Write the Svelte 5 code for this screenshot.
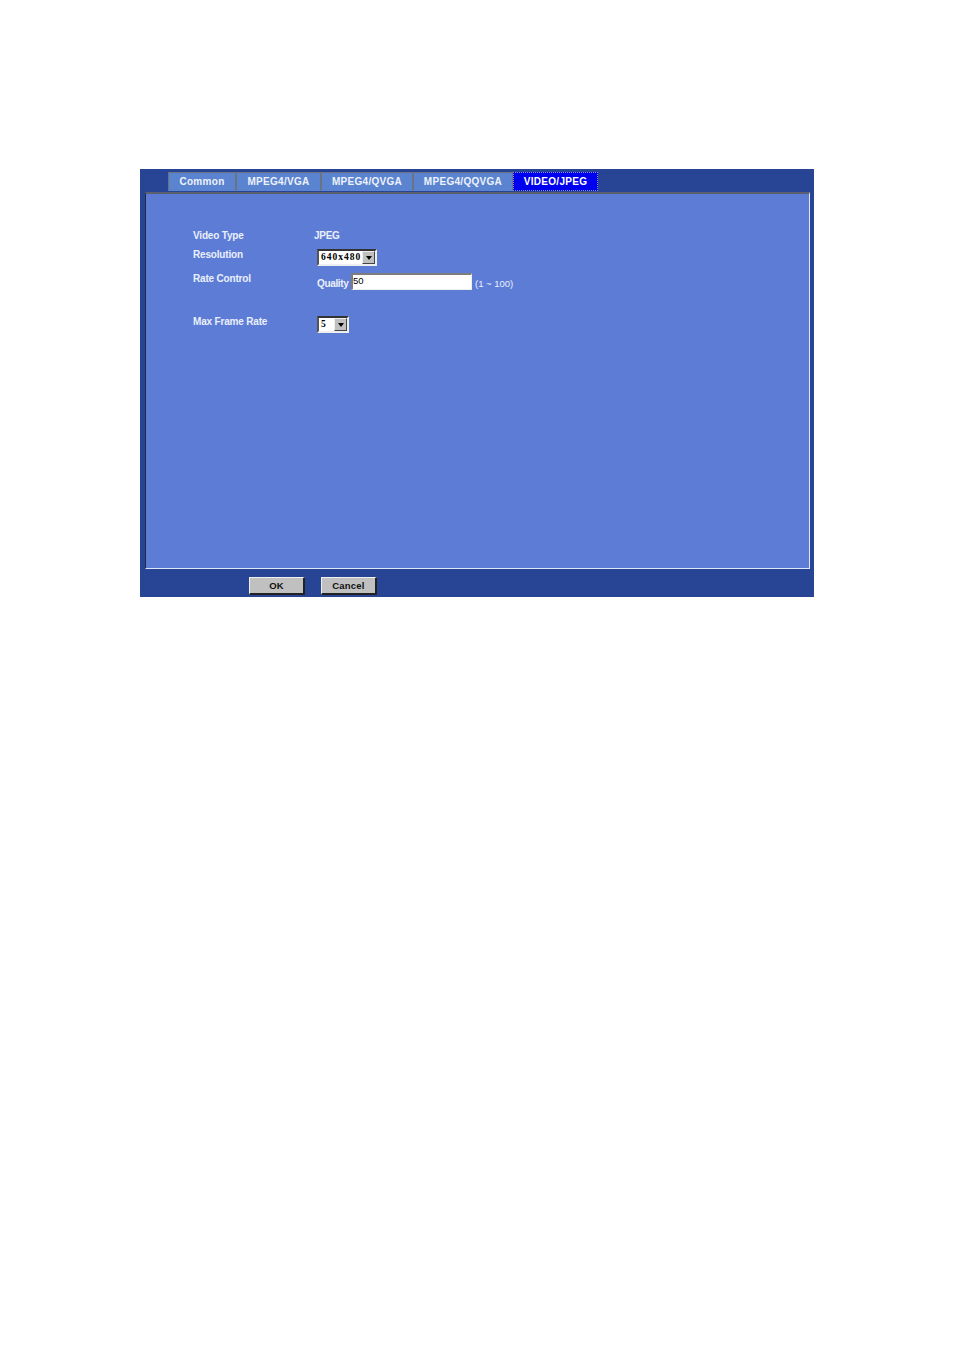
<script>
  const tabs = [
    { label: 'Common', w: 68 },
    { label: 'MPEG4/VGA', w: 85 },
    { label: 'MPEG4/QVGA', w: 92 },
    { label: 'MPEG4/QQVGA', w: 100 },
    { label: 'VIDEO/JPEG', w: 85, active: true }
  ];
</script>

<div class="page">
  <div class="window">
    <div class="tabs">
      {#each tabs as t}
        <div class="tab" class:active={t.active} style="width:{t.w}px">{t.label}</div>
      {/each}
    </div>
    <div class="panel">
      <div class="row r1"><span class="label">Video Type</span><span class="val jpeg">JPEG</span></div>
      <div class="row r2">
        <span class="label">Resolution</span>
        <div class="select res"><span class="sv">640x480</span><span class="arrow"><i></i></span></div>
      </div>
      <div class="row r3">
        <span class="label">Rate Control</span>
        <div class="quality">
          <span class="q">Quality</span>
          <div class="input">50</div>
          <span class="range">(1 ~ 100)</span>
        </div>
      </div>
      <div class="row r4">
        <span class="label">Max Frame Rate</span>
        <div class="select fps"><span class="sv">5</span><span class="arrow"><i></i></span></div>
      </div>
    </div>
    <div class="actions">
      <div class="btn">OK</div>
      <div class="btn">Cancel</div>
    </div>
  </div>
</div>

<style>
  :global(body) { margin: 0; background: #fff; }
  .page { height: 1351px; padding: 169px 0 0 140px; box-sizing: border-box; font-family: "Liberation Sans", Arial, sans-serif; }
  .window { width: 674px; height: 428px; background: #284595; box-sizing: border-box; padding: 3px 4px 0 5px; }
  .tabs { display: flex; padding-left: 23px; height: 19px; }
  .tab { box-sizing: border-box; height: 19px; background: #5b84d0; border: 1px solid #6a7284; border-bottom-color: #5b84d0; color: #eef2fb; font-size: 10px; font-weight: bold; letter-spacing: 0.3px; text-align: center; line-height: 18px; }
  .tab.active { background: #0000f0; border: 1px dotted #8a93c8; color: #fff; }
  .panel { box-sizing: border-box; height: 377px; margin-top: 1px; background: #5d7cd6; border: 1px solid; border-color: #5a6070 #dfe6f6 #dfe6f6 #1e2a4a; border-top-width: 2px; padding: 36px 0 0 47px; color: #eaf0fb; font-size: 10px; font-weight: bold; }
  .row { display: flex; align-items: flex-start; }
  .label { width: 121px; line-height: 12px; flex: none; letter-spacing: -0.18px; }
  .val { line-height: 12px; letter-spacing: -0.3px; }
  .r1 { height: 19px; }
  .r2 { height: 24px; }
  .r3 { height: 43px; }
  .r2 .select { margin: 0 0 0 3px; }
  .r4 .select { margin: 0 0 0 3px; }
  .select { box-sizing: border-box; height: 17px; background: #fff; border: 2px solid; border-color: #333 #eee #eee #555; display: flex; align-items: stretch; justify-content: space-between; }
  .res { width: 60px; }
  .fps { width: 32px; }
  .sv { font-family: "Liberation Serif", serif; font-size: 9.5px; font-weight: bold; color: #000; letter-spacing: 1px; line-height: 13px; padding-left: 2px; }
  .arrow { width: 13px; background: #c0c0c0; border: 1px solid; border-color: #eee #444 #444 #eee; box-sizing: border-box; display: flex; align-items: center; justify-content: center; }
  .arrow i { width: 0; height: 0; border: 3px solid transparent; border-top: 4px solid #000; border-bottom: 0; }
  .quality { display: flex; align-items: center; margin: 0 0 0 3px; }
  .q { margin-top: 3px; letter-spacing: -0.35px; width: 34px; }
  .input { box-sizing: border-box; width: 121px; height: 17px; background: #fff; border: 1px solid; border-color: #7d7d7d #eee #eee #7d7d7d; border-width: 2px 1px 1px 2px; color: #000; font-weight: normal; font-size: 9.5px; line-height: 12px; }
  .range { margin: 3px 0 0 3px; font-weight: normal; font-size: 9.5px; letter-spacing: 0; }
  .actions { display: flex; gap: 16px; padding: 8px 0 0 104px; }
  .btn { box-sizing: border-box; width: 56px; height: 18px; background: #c0c0c0; border: 1px solid; border-color: #f0f0f0 #222 #222 #f0f0f0; border-width: 1px 2px 2px 1px; color: #111; font-size: 9.5px; font-weight: bold; text-align: center; line-height: 15px; letter-spacing: 0.2px; }
</style>
